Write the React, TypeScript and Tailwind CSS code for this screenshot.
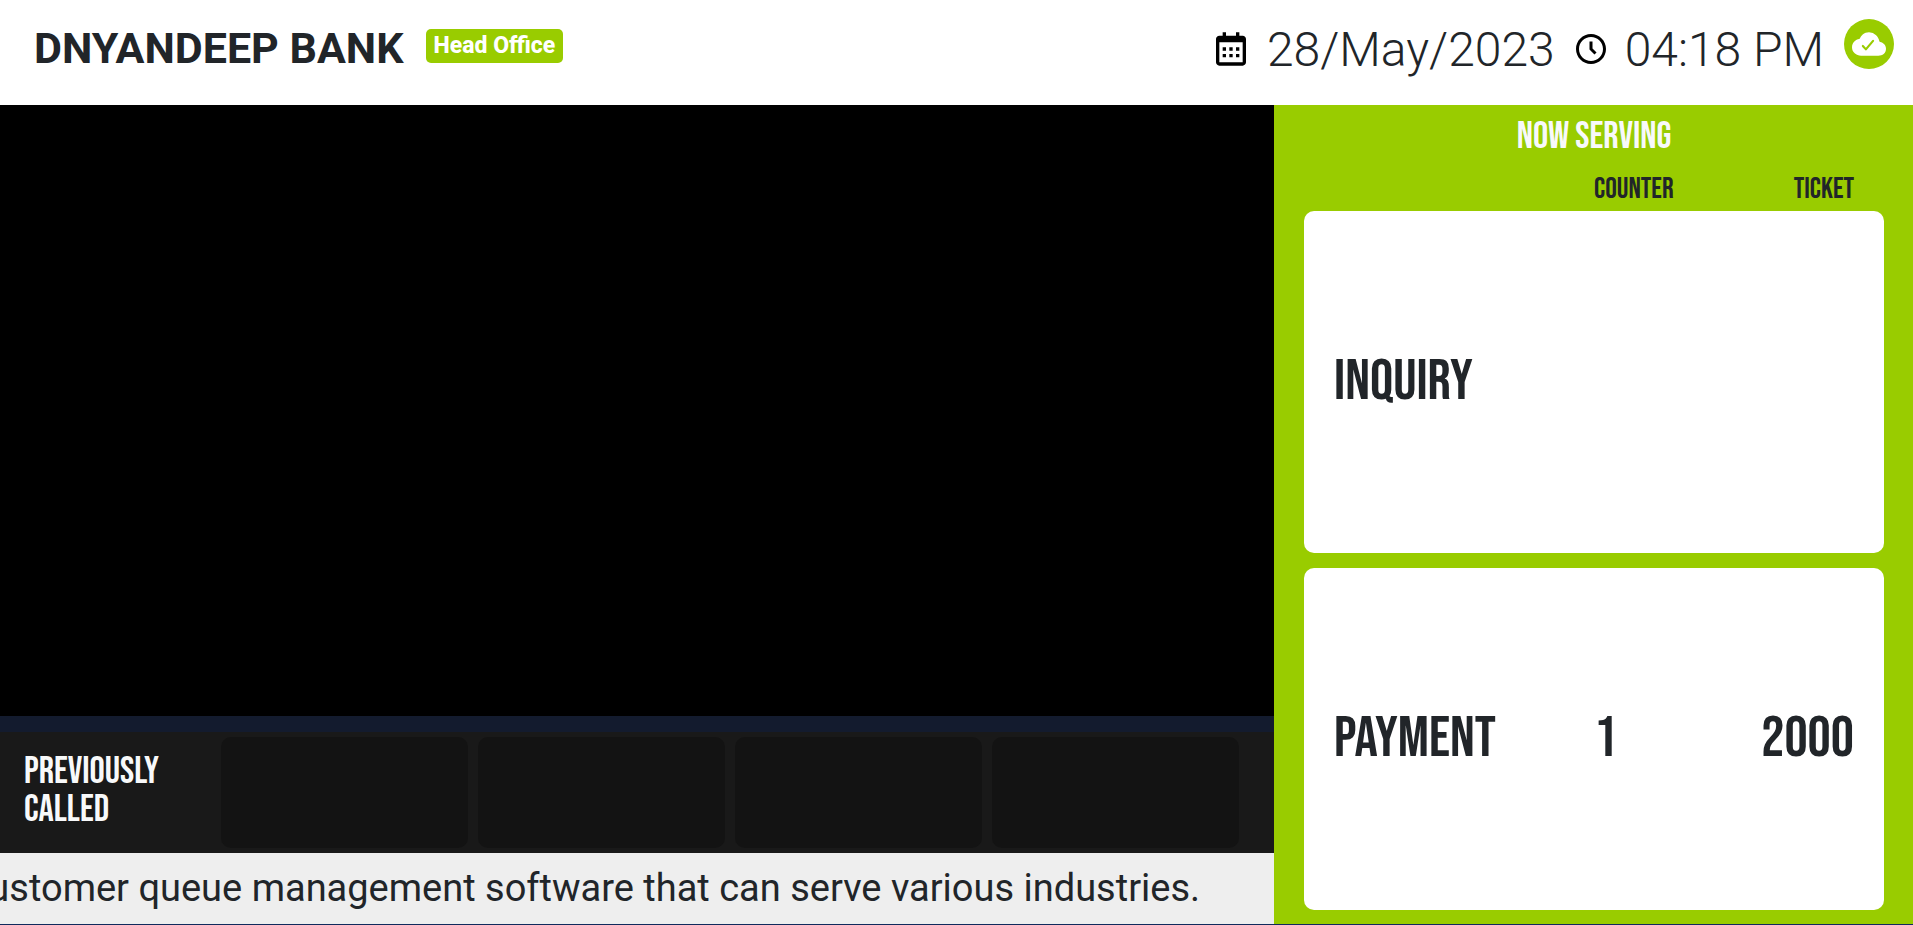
import { BiCalendar, BiTimeFive } from "react-icons/bi";
import { IoCloudDone } from "react-icons/io5";

const bebas = "font-['Bebas_Neue','Liberation_Sans_Narrow',sans-serif] font-normal";

const services = [
  { name: "INQUIRY", counter: "", ticket: "" },
  { name: "PAYMENT", counter: "1", ticket: "2000" },
];

const previous = ["", "", "", ""];

function Header() {
  return (
    <header className="flex h-[105px] items-start justify-between bg-white pl-[34px] pr-[19px]">
      <div className="flex items-start gap-[22px] pt-[22px]">
        <h1 className="text-[43px] font-bold leading-[52px]">DNYANDEEP BANK</h1>
        <span className="mt-[7px] rounded-[5px] bg-[#99cc00] px-2 text-[23px] font-extrabold leading-[34px] text-white">
          Head Office
        </span>
      </div>
      <div className="flex items-start pt-[19px] text-[48px] font-light leading-[62px]">
        <BiCalendar className="mt-[10px] size-10 text-black" />
        <time className="ml-4">28/May/2023</time>
        <BiTimeFive className="ml-[18px] mt-[12px] size-9 text-black" />
        <time className="ml-4">04:18 PM</time>
        <span className="ml-5 flex size-[50px] items-center justify-center rounded-full bg-[#99cc00] text-white">
          <IoCloudDone className="size-[34px]" />
        </span>
      </div>
    </header>
  );
}

export default function App() {
  return (
    <div className="flex h-screen flex-col overflow-hidden border-b border-[#0f2a5c] bg-white font-[Roboto,sans-serif] text-[#212529]">
      <Header />
      <main className="flex min-h-0 flex-1">
        <section className="flex w-[66.6%] flex-col">
          <div className="flex-1 bg-black" />
          <div className="h-4 bg-[#131b2e]" />
          <div className="flex h-[121px] items-center bg-[#191919] pl-6 pr-[35px]">
            <h2 className={`w-[197px] pb-1 text-[38px] leading-[38px] text-[#f8f9fa] ${bebas}`}>
              PREVIOUSLY
              <br />
              CALLED
            </h2>
            <ul className="grid h-[111px] flex-1 grid-cols-4 gap-[10px]">
              {previous.map((ticket, i) => (
                <li key={i} className="rounded-[10px] bg-[#131313]">{ticket}</li>
              ))}
            </ul>
          </div>
          <div className="flex h-[71px] items-center justify-end overflow-hidden bg-[#eeeeee] pr-[74px]">
            <p className="whitespace-nowrap pb-[2px] text-[38px] leading-[68px]">
              customer queue management software that can serve various industries.
            </p>
          </div>
        </section>
        <section className="flex flex-1 flex-col bg-[#99cc00] pb-[14px] pl-[30px] pr-[29px]">
          <h2 className={`pt-[8px] text-center text-[38px] leading-[48px] text-[#f8f9fa] ${bebas}`}>NOW SERVING</h2>
          <div className={`grid grid-cols-[1fr_132px_128px] px-[30px] pb-[2px] pt-[10px] text-[29px] leading-[38px] ${bebas}`}>
            <span className="col-start-2">COUNTER</span>
            <span className="text-right">TICKET</span>
          </div>
          <div className="flex flex-1 flex-col gap-[15px]">
            {services.map((s) => (
              <article
                key={s.name}
                className={`grid flex-1 grid-cols-[1fr_132px_128px] items-center rounded-[10px] bg-white px-[30px] text-[58px] leading-[68px] ${bebas}`}
              >
                <h3>{s.name}</h3>
                <span>{s.counter}</span>
                <span className="text-right">{s.ticket}</span>
              </article>
            ))}
          </div>
        </section>
      </main>
    </div>
  );
}
